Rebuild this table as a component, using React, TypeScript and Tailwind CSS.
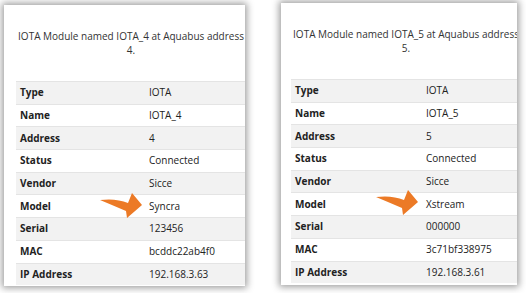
import React from "react";

type Row = [string, string];

const Arrow = ({ className }: { className: string }) => (
  <svg className={className} width="46" height="28" viewBox="0 0 46 28">
    <path d="M2 8 Q18 6 30 11 L34 1 L44 13 L29 26 L28 19 Q14 13 2 8 Z" fill="#ec7a26" />
  </svg>
);

const Card = ({
  num,
  rows,
  outer,
  pad,
  valueX,
}: {
  num: string;
  rows: Row[];
  outer: string;
  pad: string;
  valueX: string;
}) => (
  <div className={`bg-white overflow-hidden shadow-[0_0_7px_2px_rgba(0,0,0,0.38)] ${outer}`}>
    <div className={`${pad} flex flex-col`}>
      <div className="w-[230px] h-[76px] pt-[24px] text-center text-[10px] leading-[14px] text-[#333] whitespace-nowrap">
        <div>IOTA Module named IOTA_{num} at Aquabus address</div>
        <div>{num}.</div>
      </div>
      <div className="flex flex-col">
        {rows.map(([k, v], i) => (
          <div
            key={k}
            className={`flex h-[22.7px] items-center border-t border-[#e4e4e4] text-[10px] text-[#222] ${
              i % 2 === 0 ? "bg-[#f2f2f2]" : "bg-white"
            }`}
          >
            <div className={`${valueX} pl-[4px] font-bold`}>{k}</div>
            <div>{v}</div>
          </div>
        ))}
      </div>
    </div>
  </div>
);

export default function App() {
  const left: Row[] = [
    ["Type", "IOTA"],
    ["Name", "IOTA_4"],
    ["Address", "4"],
    ["Status", "Connected"],
    ["Vendor", "Sicce"],
    ["Model", "Syncra"],
    ["Serial", "123456"],
    ["MAC", "bcddc22ab4f0"],
    ["IP Address", "192.168.3.63"],
  ];
  const right: Row[] = [
    ["Type", "IOTA"],
    ["Name", "IOTA_5"],
    ["Address", "5"],
    ["Status", "Connected"],
    ["Vendor", "Sicce"],
    ["Model", "Xstream"],
    ["Serial", "000000"],
    ["MAC", "3c71bf338975"],
    ["IP Address", "192.168.3.61"],
  ];
  return (
    <div
      className="relative w-[526px] h-[293px] bg-white flex items-start"
      style={{ fontFamily: '"Open Sans", "Noto Sans", sans-serif' }}
    >
      <Card num="4" rows={left} outer="ml-[4px] mt-[5px] w-[241px] h-[281px]" pad="pl-[12px]" valueX="w-[133px]" />
      <Card num="5" rows={right} outer="ml-[36px] mt-[3px] w-[236px] h-[282px]" pad="pl-[10px]" valueX="w-[135px]" />
      <Arrow className="absolute left-[98px] top-[192px]" />
      <Arrow className="absolute left-[374px] top-[189px]" />
    </div>
  );
}
